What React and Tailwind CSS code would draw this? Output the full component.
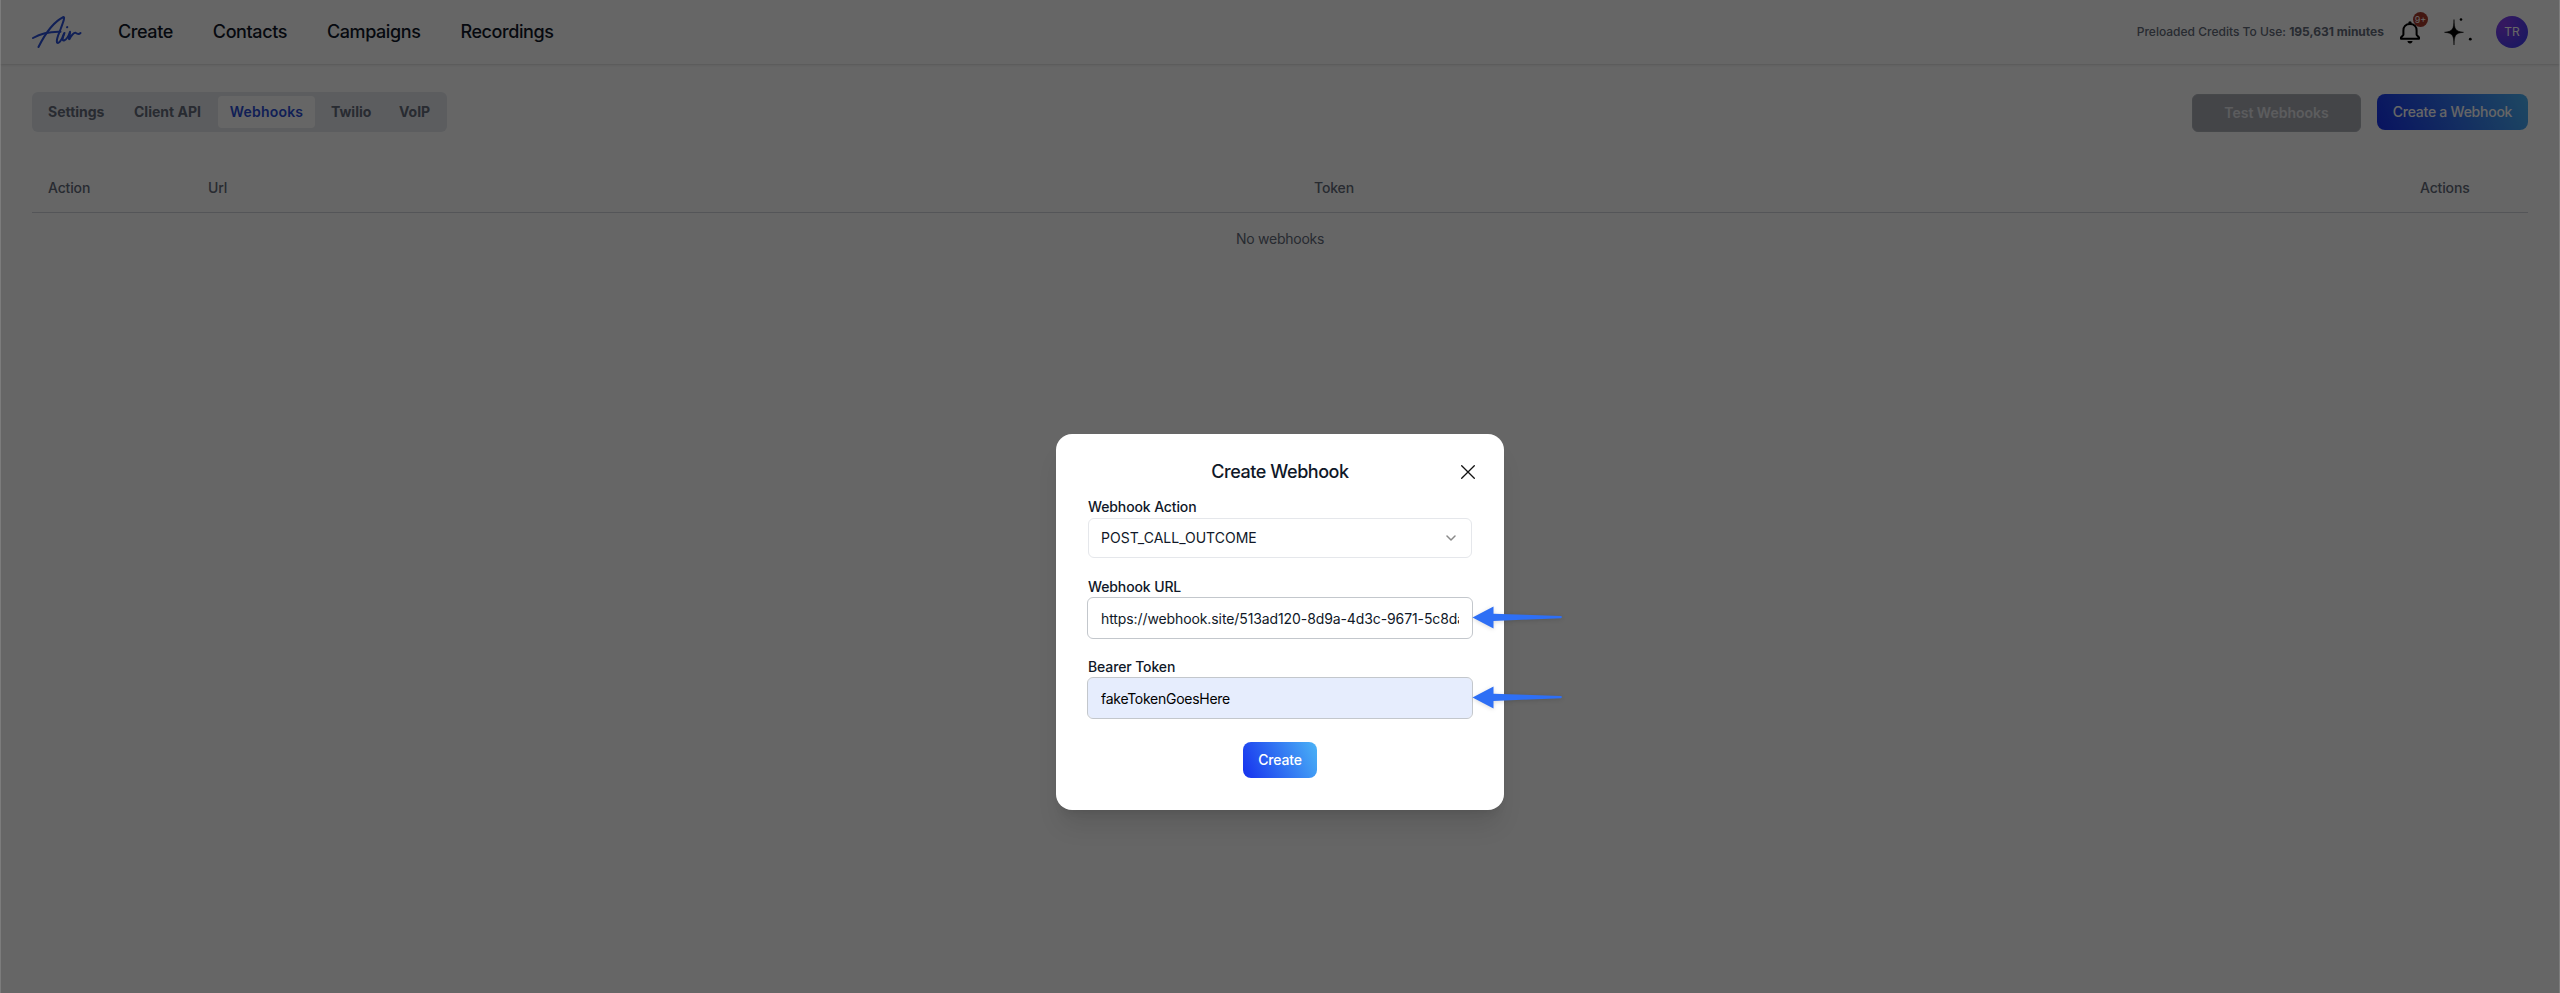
import React from 'react';

const NAV = ['Create', 'Contacts', 'Campaigns', 'Recordings'];

function Logo() {
  return (
    <svg className="h-8 w-[50px]" viewBox="0 0 50 32" fill="none" stroke="#2b50d8" strokeWidth="2" strokeLinecap="round" strokeLinejoin="round">
      <path d="M6.500 31C12 20 21 6 31.500 1C33 1 31.500 5 29 12C27 18 24 23 25 26.500C26.500 28 29.500 25 32 17.500" />
      <path d="M1 22C9 17.500 19 15.500 28.500 15.800" />
      <path d="M32.500 17C31 21 29.500 25 32 24.500C35 23.500 37 19 38 15.800C38.500 18 36 24 37.500 23C39 19.500 42 16.500 43.500 16.800C44.500 17.500 47 18.500 48.500 17" />
      <path d="M35 11.300L35.300 11.100" />
    </svg>
  );
}

function Bell() {
  return (
    <svg className="h-6 w-6" viewBox="0 0 24 24" fill="none">
      <path d="M3 18.700H21V17.500L18.600 14.800V10.500C18.600 7 16.500 4 12 4C7.500 4 5.400 7 5.400 10.500V14.800L3 17.500Z" stroke="#000" strokeWidth="2" strokeLinejoin="round" />
      <circle cx="12" cy="2.900" r="1.700" fill="#000" />
      <path d="M9.500 21H14.500C14.500 22.400 13.400 23.500 12 23.500S9.500 22.400 9.500 21Z" fill="#000" />
    </svg>
  );
}

function Sparkle() {
  return (
    <svg className="h-7 w-7" viewBox="0 0 28 28" fill="#000">
      <path d="M10 1.500C10.400 11 10.900 13.300 19.500 14.300C10.900 15.200 10.400 17.500 10 27C9.600 17.500 9.100 15.200 .5 14.300C9.100 13.300 9.600 11 10 1.500Z" stroke="#000" strokeWidth=".5" />
      <circle cx="10" cy="14.300" r="2" />
      <circle cx="17" cy="1.500" r="1.300" />
      <circle cx="26.300" cy="21.200" r="1.400" />
    </svg>
  );
}

function Header() {
  return (
    <header className="flex h-16 items-center justify-between bg-white px-8 shadow">
      <div className="flex items-center">
        <Logo />
        <nav className="ml-9 flex gap-10 text-lg font-medium tracking-[-0.41px] text-gray-900">
          {NAV.map((item) => (
            <a key={item}>{item}</a>
          ))}
        </nav>
      </div>
      <div className="flex items-center">
        <p className="text-xs font-medium text-[#646b7a]">
          Preloaded Credits To Use: <span className="font-bold">195,631 minutes</span>
        </p>
        <div className="relative ml-[14px]">
          <Bell />
          <span className="absolute -top-2 left-[15px] flex h-[15px] w-[15px] items-center justify-center rounded-full bg-[#a83a2c] text-[9px] text-white">9+</span>
        </div>
        <div className="ml-[22px]">
          <Sparkle />
        </div>
        <div className="ml-6 flex h-8 w-8 items-center justify-center rounded-full bg-radial-[at_25%_25%] from-[#8a3cee] to-[#4a3cf2] to-75% text-xs text-white">TR</div>
      </div>
    </header>
  );
}

function Toolbar() {
  return (
    <div className="flex justify-between px-8 pt-7">
      <div className="flex h-10 w-[415px] items-center rounded-md bg-[#e5e8ee] p-1 text-sm font-bold text-[#646b7a]">
        <span className="w-[82px] pl-3">Settings</span>
        <span className="ml-1 w-24 pl-3">Client API</span>
        <span className="flex h-8 w-[97px] items-center justify-center rounded-sm bg-white font-semibold tracking-[0.2px] text-[#2c4fd6]">Webhooks</span>
        <span className="ml-1 w-16 pl-3">Twilio</span>
        <span className="ml-1 pl-3">VoIP</span>
      </div>
      <div className="flex items-start gap-4 pt-0.5 text-sm text-white">
        <button className="h-[38px] w-[169px] rounded-md border border-[#b0b3ba] bg-[#aaadb5] font-semibold text-[#e6e7ea]">Test Webhooks</button>
        <button className="h-9 w-[151px] rounded-lg bg-linear-65/srgb from-[#1631ee] to-[#4bb3f6] font-medium tracking-[-0.25px]">Create a Webhook</button>
      </div>
    </div>
  );
}

function WebhookTable() {
  return (
    <section className="mx-8 mt-8 text-sm font-medium text-[#646b7a]">
      <div className="flex h-[49px] items-center border-b border-gray-300 px-4 tracking-[-0.15px]">
        <span className="w-40">Action</span>
        <span className="w-[1106px]">Url</span>
        <span className="w-[1106px]">Token</span>
        <span>Actions</span>
      </div>
      <p className="pt-4 text-center font-normal tracking-[-0.25px]">No webhooks</p>
    </section>
  );
}

function Arrow() {
  return (
    <svg className="absolute -right-[91px] top-[5px] h-7 w-[92px] drop-shadow-sm" viewBox="0 0 92 28" fill="#2e6ff5">
      <path d="M1.500 14.500L22.500 3.500V10.700L90 13Q92 14 90 15.200L22.500 18V25.500Z" />
    </svg>
  );
}

function Field({ label, children }) {
  return (
    <div className="mb-[19px] h-[61px]">
      <p className="h-[21px] text-sm font-medium tracking-[-0.12px] text-gray-900">{label}</p>
      {children}
    </div>
  );
}

function CreateDialog() {
  return (
    <div className="h-[376px] w-[448px] rounded-2xl bg-white px-8 pt-6 text-sm text-gray-900 shadow-xl">
      <div className="relative flex h-7 items-center justify-center text-lg font-medium tracking-[-0.45px]">
        Create Webhook
        <svg className="absolute right-[-3px] top-[7px] h-[14px] w-[14px]" viewBox="0 0 14 14" stroke="#111" strokeWidth="1.300" strokeLinecap="round">
          <path d="M.7 .7L13.300 13.300M13.300 .7L.7 13.300" />
        </svg>
      </div>
      <div className="pt-[11px]">
        <Field label="Webhook Action">
          <div className="flex h-10 items-center justify-between rounded-md border border-gray-200 pl-3 pr-[15px]">
            POST_CALL_OUTCOME
            <svg className="h-2 w-[10px]" viewBox="0 0 10 8" fill="none" stroke="#8a8a8a" strokeWidth="1.500" strokeLinecap="round" strokeLinejoin="round">
              <path d="M1 2L5 6L9 2" />
            </svg>
          </div>
        </Field>
        <Field label="Webhook URL">
          <div className="relative h-10 rounded-[5px] px-[13px] outline-1 outline-[#c3c7cc]">
            <input readOnly className="h-full w-full tracking-[-0.1px] outline-none" value="https://webhook.site/513ad120-8d9a-4d3c-9671-5c8da2" />
            <Arrow />
          </div>
        </Field>
        <Field label="Bearer Token">
          <div className="relative h-10 rounded-[5px] bg-[#e6edfd] px-[13px] text-black outline-1 outline-[#c3c7cc]">
            <input readOnly className="h-full w-full tracking-[-0.27px] outline-none" value="fakeTokenGoesHere" />
            <Arrow />
          </div>
        </Field>
        <button className="mx-auto mt-6 block h-9 w-[74px] rounded-lg bg-linear-65/srgb from-[#1631ee] to-[#4bb3f6] font-medium tracking-[-0.2px] text-white">Create</button>
      </div>
    </div>
  );
}

export default function App() {
  return (
    <div className="relative h-[993px] w-[2560px] overflow-hidden bg-white font-['Inter',sans-serif]">
      <Header />
      <Toolbar />
      <WebhookTable />
      <div className="absolute inset-0 flex items-start justify-center border-x border-white/15 bg-black/60 pt-[434px]">
        <CreateDialog />
      </div>
    </div>
  );
}
